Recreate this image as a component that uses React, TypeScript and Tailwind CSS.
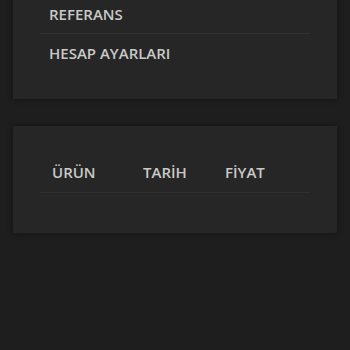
export default function App() {
    const menu = ['REFERANS', 'HESAP AYARLARI'];
    const cols = [
        { label: 'ÜRÜN', w: 'w-[103px] pl-[12px]' },
        { label: 'TARİH', w: 'w-[82px]' },
        { label: 'FİYAT', w: 'flex-1' },
    ];

    return (
        <div className="min-h-[350px] w-[350px] bg-[#1f1e1f] px-[13px] font-['Open_Sans',sans-serif] text-[15px] font-semibold text-[#c9c9c9] overflow-hidden">
            <div className="-mt-[5px] bg-[#262626] px-[27px] pb-[26px] shadow-[0_0_6px_rgba(0,0,0,0.45)]">
                {menu.map((item, i) => (
                    <div
                        key={item}
                        className={`flex h-[39px] items-center pl-[9px] ${i < menu.length - 1 ? 'border-b border-[#313131]' : ''}`}
                    >
                        {item}
                    </div>
                ))}
            </div>

            <div className="mt-[27px] bg-[#262626] px-[27px] pt-[26px] pb-[40px] shadow-[0_0_6px_rgba(0,0,0,0.45)]">
                <div className="flex h-[41px] items-center border-b border-[#2f2f2f]">
                    {cols.map((c) => (
                        <div key={c.label} className={c.w}>
                            {c.label}
                        </div>
                    ))}
                </div>
            </div>
        </div>
    );
}
